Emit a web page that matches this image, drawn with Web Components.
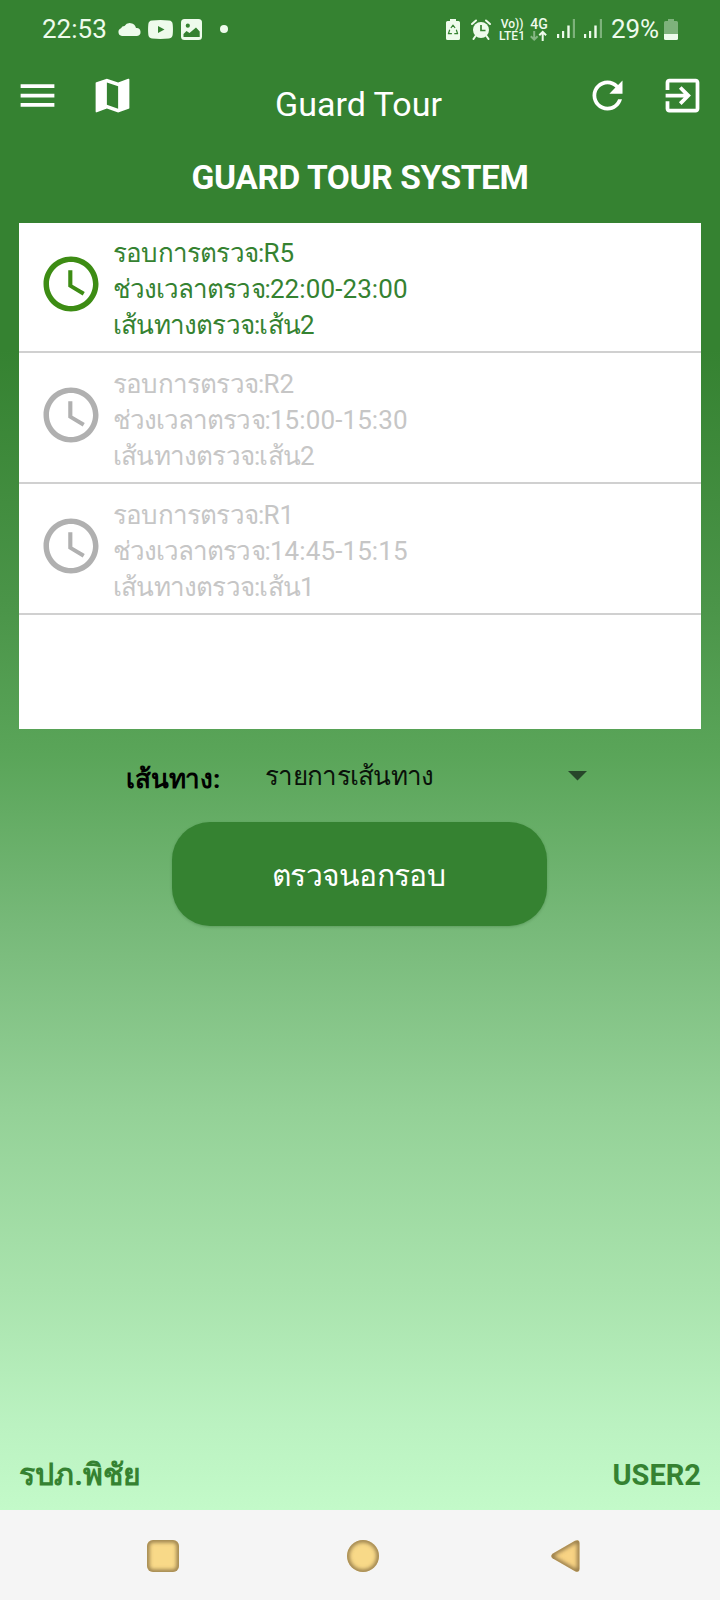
<!DOCTYPE html>
<html lang="th"><head><meta charset="utf-8"><title>Guard Tour</title>
<style>html,body{margin:0;height:1600px;overflow:hidden}body{font-family:Roboto,"Noto Sans",sans-serif}</style></head>
<body><guard-app></guard-app>
<script>
const define=(name,html,setup)=>customElements.define(name,class extends HTMLElement{
  connectedCallback(){
    if(this.shadowRoot)return;
    const t=document.createElement('template');t.innerHTML=html;
    this.attachShadow({mode:'open'}).append(t.content.cloneNode(true));
    if(setup)setup(this,this.shadowRoot);
  }
});

/* Material icons, 24-unit grid */
const icons={
 menu:'M3 18h18v-2H3v2zm0-5h18v-2H3v2zm0-7v2h18V6H3z',
 map:'M20.5 3l-.16.03L15 5.1 9 3 3.36 4.9c-.21.07-.36.25-.36.48V20.5c0 .28.22.5.5.5l.16-.03L9 18.9l6 2.1 5.64-1.9c.21-.07.36-.25.36-.48V3.5c0-.28-.22-.5-.5-.5zM15 19l-6-2.11V5l6 2.11V19z',
 refresh:'M17.65 6.35C16.2 4.9 14.21 4 12 4c-4.42 0-7.99 3.58-7.99 8s3.57 8 7.99 8c3.73 0 6.84-2.55 7.73-6h-2.08c-.82 2.33-3.04 4-5.65 4-3.31 0-6-2.69-6-6s2.69-6 6-6c1.66 0 3.14.69 4.22 1.78L13 11h7V4l-2.35 2.35z',
 exit:'M10.09 15.59L11.5 17l5-5-5-5-1.41 1.41L12.67 11H3v2h9.67l-2.58 2.59zM19 3H5c-1.11 0-2 .9-2 2v4h2V5h14v14H5v-4H3v4c0 1.1.89 2 2 2h14c1.1 0 2-.9 2-2V5c0-1.1-.9-2-2-2z',
 clock:'M11.99 2C6.47 2 2 6.48 2 12s4.47 10 9.99 10C17.52 22 22 17.52 22 12S17.52 2 11.99 2zM12 20c-4.42 0-8-3.58-8-8s3.58-8 8-8 8 3.58 8 8-3.58 8-8 8zm.5-13H11v6l5.25 3.15.75-1.23-4.5-2.67z'
};
define('md-icon','<style>:host{display:block;width:45px;height:45px;flex:none}svg{display:block;width:100%;height:100%;fill:currentColor}</style><svg viewBox="0 0 24 24"><path/></svg>',
 (el,r)=>r.querySelector('path').setAttribute('d',icons[el.getAttribute('name')]));

/* Thai runs are tracked more tightly than the Latin ones */
define('thai-text','<style>:host{display:inline;font-size:var(--size,1em);letter-spacing:var(--track,-.7px)}</style><slot></slot>');

define('status-bar',`<style>
:host{display:flex;height:58px;box-sizing:border-box;padding:0 42px 0 42px;align-items:center;color:#eefbec;font-size:26px;line-height:58px}
svg{display:block;flex:none;fill:#eefbec}.t{width:76px}.sp{flex:1}
.net{font:500 12px/12px Roboto;display:grid;grid-template-rows:12px 12px;justify-items:center;width:28px;margin:2px 0 0 7px;white-space:nowrap}
.net span{display:block;height:12px}
.g{font:500 14px/12px Roboto;width:18px;margin:2px 0 0 4px;text-align:center}
.p{width:50px;margin-left:8px;letter-spacing:-.1px;white-space:nowrap}
</style><span class="t">22:53</span>
<svg width="23" height="14" viewBox="0 0 23 14"><path d="M4 14A4 4 0 0 1 3 6.3 4 4 0 0 1 6.500 4 6.300 6.300 0 0 1 18 6 4 4 0 0 1 19 14z"/></svg>
<svg style="margin-left:7px" width="25" height="19" viewBox="0 0 25 19"><path fill-rule="evenodd" d="M4 .5Q12.500-.5 21 .5Q24.500.8 24.700 4.500Q25.200 9.500 24.700 14.500Q24.500 18 21 18.500Q12.500 19.300 4 18.500Q.5 18 .3 14.500Q-.2 9.500.3 4.500Q.5.8 4 .5zM10 6v7l6.500-3.500z"/></svg>
<svg style="margin-left:8px" width="21" height="21" viewBox="0 0 21 21"><rect width="21" height="21" rx="3.500"/><g fill="#358231"><circle cx="6.800" cy="6.700" r="2.100"/><path d="M2.500 18v-3l3-3 3 2L15 8.500l3.700 4V18z"/></g></svg>
<svg style="margin-left:18px" width="8" height="8"><circle cx="4" cy="4" r="4"/></svg>
<span class="sp"></span>
<svg width="14" height="21" viewBox="0 0 14 21"><path d="M4 0h6v2h2.500Q14 2 14 3.500v16Q14 21 12.500 21h-11Q0 21 0 19.500v-16Q0 2 1.500 2H4z"/><path d="M4.900 9 7 6.200l2.100 2.800M10.300 10.700l1.300 4H8.300M5.900 14.700H2.400L3.700 10.700" fill="none" stroke="#358231" stroke-width="1.200" stroke-linejoin="round"/></svg>
<svg style="margin-left:11px" width="20" height="21" viewBox="0 0 20 21"><circle cx="10" cy="11" r="8"/><path d="M1 5 5 1.500M19 5l-4-3.500M4.500 17l-2 3M15.500 17l2 3" stroke="#eefbec" stroke-width="2" stroke-linecap="round"/><path d="M10 6v5.500h4.500" fill="none" stroke="#358231" stroke-width="1.700"/></svg>
<div class="net"><span>Vo))</span><span>LTE1</span></div>
<div class="g">4G<svg width="17" height="12" viewBox="0 0 17 12"><g fill="none" stroke-width="2"><path stroke="#86b684" d="M4.200 1v9M.8 6.300l3.400 3.400 3.400-3.400"/><path stroke="#eefbec" d="M12.700 11V2M9.300 5.300l3.400-3.400 3.400 3.400"/></g></svg></div>
<svg style="margin-left:9px" width="19" height="20" viewBox="0 0 19 20"><path d="M0 15h2.200v4H0zM5 12h2.200v7H5zM10.300 6.500h2.400v12.500h-2.400z"/><path d="M15.800 0H18v19h-2.200z" opacity=".4"/></svg>
<svg style="margin-left:8px" width="19" height="20" viewBox="0 0 19 20"><path d="M0 15h2.200v4H0zM5 12h2.200v7H5zM10.300 6.500h2.400v12.500h-2.400z"/><path d="M15.800 0H18v19h-2.200z" opacity=".4"/></svg>
<span class="p">29%</span>
<svg style="margin-left:3px" width="14" height="21" viewBox="0 0 14 21"><path opacity=".4" d="M4 0h6v2h2.500Q14 2 14 3.500V15H0V3.500Q0 2 1.500 2H4z"/><path d="M0 15h14v4.500Q14 21 12.500 21h-11Q0 21 0 19.500z"/></svg>`);

define('app-bar',`<style>
:host{display:grid;grid-template-columns:45px 45px 1fr 45px 45px;height:75px;padding:0 15.500px 0 14.500px;color:#fff}
md-icon{margin-top:15px}md-icon:nth-of-type(2){margin-left:30px}md-icon:nth-of-type(3){margin-left:-30px}
h1{margin:26px 2px 0 0;font-size:34px;line-height:40px;font-weight:400;text-align:center;white-space:nowrap}
</style><md-icon name="menu"></md-icon><md-icon name="map"></md-icon><h1><slot></slot></h1><md-icon name="refresh"></md-icon><md-icon name="exit"></md-icon>`);

define('round-item',`<style>
:host{display:flex;height:129px;border-bottom:2px solid #d0d0d0;color:#c6c6c6;--icon:#b0b0b0}
:host([active]){color:#358231;--icon:#3d8c14}
md-icon{width:66px;height:66px;margin:29px 0 0 19px;color:var(--icon)}
div{margin:13px 0 0 9px;font-size:26px;line-height:36px;white-space:nowrap}
p{margin:0;height:36px}
</style><md-icon name="clock"></md-icon><div><p><thai-text style="--track:-.8px">รอบการตรวจ:</thai-text><span id="a"></span></p><p><thai-text style="--track:-.95px">ช่วงเวลาตรวจ:</thai-text><span id="b" style="letter-spacing:.1px"></span></p><p><thai-text style="--track:-.8px">เส้นทางตรวจ:เส้น</thai-text><span id="c"></span></p></div>`,
 (el,r)=>[['a','round'],['b','time'],['c','route']].forEach(([i,n])=>r.getElementById(i).textContent=el.getAttribute(n)));

define('round-list','<style>:host{display:block;height:506px;margin:0 19px;background:#fff}slot{display:block;margin-top:-1px}</style><slot></slot>');

define('route-picker',`<style>
:host{display:flex;height:93px;padding:0 133px 0 126px;color:#0a120a;white-space:nowrap;align-items:flex-start}
b{font-size:26px;line-height:40px;margin-top:30px;width:139px;color:#000}
span{font-size:26px;line-height:40px;margin-top:27px;flex:1}
svg{display:block;margin-top:42px}
</style><b><thai-text style="--track:-.15px">เส้นทาง:</thai-text></b><span><thai-text>รายการเส้นทาง</thai-text></span><svg width="19" height="10"><path d="M0 0h19L9.500 9.500z" fill="#27462a"/></svg>`);

define('pill-button',`<style>:host{display:block;width:375px;height:104px;margin:0 0 0 172px}
button{width:100%;height:100%;border:0;border-radius:38px;background:#358231;color:#fff;font:400 30px/40px Roboto,"Noto Sans",sans-serif;padding:4px 2px 0 0;box-shadow:0 1px 3px rgba(0,60,0,.22)}</style><button><slot></slot></button>`);

define('user-bar',`<style>:host{display:flex;justify-content:space-between;margin:auto 19px 15px;color:#358231;font-weight:700;font-size:29px;line-height:40px}</style><slot name="name"></slot><slot name="id"></slot>`);

define('nav-bar',`<style>:host{display:flex;height:90px;background:#f5f5f5;padding:30px 140px 0 147px;box-sizing:border-box}svg{display:block}svg+svg{margin-left:168px}svg:last-child{margin-left:172px}</style>
<svg width="32" height="32"><defs><filter id="s" x="-10%" y="-10%" width="120%" height="120%"><feGaussianBlur stdDeviation="2.200"/></filter><clipPath id="k"><rect width="32" height="32" rx="6"/></clipPath></defs><g clip-path="url(#k)"><rect width="32" height="32" fill="#f8d988"/><rect width="32" height="32" rx="6" fill="none" stroke="#80683c" stroke-width="4" filter="url(#s)"/></g></svg>
<svg width="32" height="32"><defs><filter id="s2" x="-10%" y="-10%" width="120%" height="120%"><feGaussianBlur stdDeviation="2.200"/></filter><clipPath id="k2"><circle cx="16" cy="16" r="16"/></clipPath></defs><g clip-path="url(#k2)"><rect width="32" height="32" fill="#f8d988"/><circle cx="16" cy="16" r="16" fill="none" stroke="#80683c" stroke-width="4" filter="url(#s2)"/></g></svg>
<svg width="29" height="32"><defs><filter id="s3" x="-10%" y="-10%" width="120%" height="120%"><feGaussianBlur stdDeviation="1.900"/></filter><clipPath id="k3"><path d="M1.500 13.700 24 .8Q28.500-1 28.500 3.500v25Q28.500 33 24 31.200L1.500 18.300Q-1 16 1.500 13.700z"/></clipPath></defs><g clip-path="url(#k3)"><rect width="29" height="32" fill="#f8d384"/><path d="M1.500 13.700 24 .8Q28.500-1 28.500 3.500v25Q28.500 33 24 31.200L1.500 18.300Q-1 16 1.500 13.700z" fill="none" stroke="#80683c" stroke-width="4" filter="url(#s3)"/></g></svg>`);

define('guard-app',`<style>
:host{display:block;width:720px;height:1600px}
main{display:flex;flex-direction:column;height:1510px;background:linear-gradient(#358231 0 350px,#4a9448 600px,#5aa559 755px,#77b979 925px,#94d197 1110px,#a9e3ad 1290px,#bbf2c1 1425px,#c3fac9 1510px)}
h2{margin:0;height:90px;padding-top:25px;box-sizing:border-box;font-size:33.500px;letter-spacing:-.4px;line-height:40px;font-weight:700;color:#fff;text-align:center}
</style><main><status-bar></status-bar><app-bar>Guard Tour</app-bar><h2>GUARD TOUR SYSTEM</h2>
<round-list><round-item active round="R5" time="22:00-23:00" route="2"></round-item><round-item round="R2" time="15:00-15:30" route="2"></round-item><round-item round="R1" time="14:45-15:15" route="1"></round-item></round-list>
<route-picker></route-picker><pill-button><thai-text>ตรวจนอกรอบ</thai-text></pill-button>
<user-bar><span slot="name"><thai-text style="--size:1.04em;--track:.1px">รปภ.พิชัย</thai-text></span><span slot="id">USER2</span></user-bar></main><nav-bar></nav-bar>`);
</script></body></html>
